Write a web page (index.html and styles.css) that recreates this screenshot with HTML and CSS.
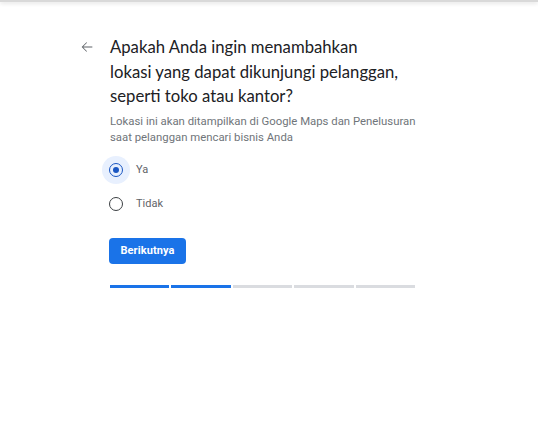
FILE: index.html
```html
<!DOCTYPE html>
<html lang="id">
<head>
<meta charset="utf-8">
<link rel="stylesheet" href="styles.css">
</head>
<body>
<div class="topbar"></div>
<main class="page">
  <button class="back" aria-label="Kembali">
    <svg width="16" height="16" viewBox="0 0 24 24"><path d="M20 11.3H6.4l5.6-5.6-.8-.8L4 12l7.2 7.1.8-.8-5.6-5.6H20z" fill="#5f6368"/></svg>
  </button>
  <section class="content">
    <h1 class="title">Apakah Anda ingin menambahkan<br>lokasi yang dapat dikunjungi pelanggan,<br>seperti toko atau kantor?</h1>
    <p class="sub">Lokasi ini akan ditampilkan di Google Maps dan Penelusuran saat pelanggan mencari bisnis Anda</p>
    <div class="options">
      <label class="opt">
        <span class="radio-wrap checked"><span class="radio"><span class="dot"></span></span></span>
        <span class="opt-label">Ya</span>
      </label>
      <label class="opt">
        <span class="radio-wrap"><span class="radio"></span></span>
        <span class="opt-label">Tidak</span>
      </label>
    </div>
    <button class="next">Berikutnya</button>
    <div class="progress">
      <span class="seg done"></span>
      <span class="seg done"></span>
      <span class="seg"></span>
      <span class="seg"></span>
      <span class="seg"></span>
    </div>
  </section>
</main>
</body>
</html>
```

FILE: styles.css
```css
html, body {
  margin: 0;
  padding: 0;
  background: #fff;
  font-family: Roboto, "Liberation Sans", Arial, sans-serif;
}
.topbar {
  height: 2px;
  background: #d9d9d9;
  box-shadow: 0 1px 4px rgba(0,0,0,0.18);
}
.page {
  display: flex;
  padding-left: 76px;
  padding-top: 33px;
}
.back {
  width: 22px;
  height: 24px;
  margin-right: 12px;
  padding: 0;
  border: 0;
  background: none;
  display: flex;
  align-items: center;
  justify-content: center;
  cursor: pointer;
}
.content {
  width: 305px;
}
.title {
  margin: 0;
  font-family: Lato, Roboto, "Liberation Sans", sans-serif;
  font-size: 16.7px;
  font-weight: 400;
  line-height: 24.5px;
  color: #202124;
  white-space: nowrap;
}
.sub {
  margin: 4px 0 0;
  width: 312px;
  font-size: 11.35px;
  line-height: 16px;
  color: #70757a;
}
.options {
  margin-top: 11px;
  display: flex;
  flex-direction: column;
  gap: 6px;
}
.opt {
  display: flex;
  align-items: center;
  margin-left: -8px;
}
.radio-wrap {
  width: 28px;
  height: 28px;
  border-radius: 50%;
  display: flex;
  align-items: center;
  justify-content: center;
}
.radio-wrap.checked {
  background: #e8f0fe;
}
.radio {
  box-sizing: border-box;
  width: 14px;
  height: 14px;
  border: 1.8px solid #3c4043;
  border-radius: 50%;
  display: flex;
  align-items: center;
  justify-content: center;
}
.checked .radio {
  border-color: #1a56c2;
}
.dot {
  width: 6px;
  height: 6px;
  border-radius: 50%;
  background: #1a56c2;
}
.opt-label {
  margin-left: 6px;
  font-size: 11px;
  color: #5f6368;
}
.next {
  margin-top: 20px;
  margin-left: -1px;
  width: 77px;
  height: 26px;
  padding: 0;
  border: 0;
  border-radius: 4px;
  background: #1a73e8;
  color: #fff;
  font-family: Roboto, "Liberation Sans", Arial, sans-serif;
  font-size: 11px;
  font-weight: 700;
  letter-spacing: 0.1px;
  cursor: pointer;
  display: block;
}
.progress {
  margin-top: 21px;
  display: flex;
  gap: 2px;
}
.seg {
  flex: 1;
  height: 3px;
  background: #dadce0;
}
.seg.done {
  background: #1a73e8;
}
```
